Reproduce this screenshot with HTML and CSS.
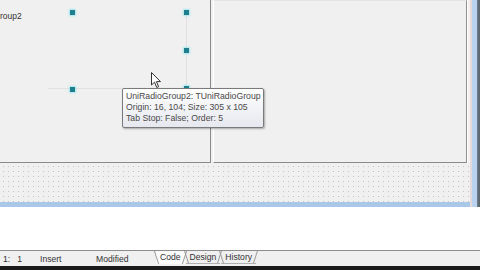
FILE: index.html
```html
<!DOCTYPE html>
<html>
<head>
<meta charset="utf-8">
<link rel="stylesheet" href="styles.css">
</head>
<body>
<div class="screen">
  <div class="form-window">
    <div class="form-body">
      <div class="panels">
        <div class="panel left">
          <div class="caption">roup2</div>
          <div class="sel-line v"></div>
          <div class="sel-line h"></div>
          <div class="handle h1"></div>
          <div class="handle h2"></div>
          <div class="handle h3"></div>
          <div class="handle h4"></div>
          <div class="handle h5"></div>
          <svg class="cursor" width="11" height="17" viewBox="0 0 11 17"><path d="M0.5 0.5 L0.5 13 L3.5 10.2 L5.8 15.5 L7.6 14.7 L5.4 9.6 L9.5 9.6 Z" fill="#fff" stroke="#333" stroke-width="1"/></svg>
          <div class="tooltip">
            <div>UniRadioGroup2: TUniRadioGroup</div>
            <div>Origin: 16, 104; Size: 305 x 105</div>
            <div>Tab Stop: False; Order: 5</div>
          </div>
        </div>
        <div class="panel right"></div>
        <div class="edge"></div>
      </div>
      <div class="dots"></div>
    </div>
    <div class="frame-right"></div>
  </div>
  <div class="white-area"></div>
  <div class="statusbar">
    <span class="cell pos">1:&nbsp;&nbsp; 1</span>
    <span class="cell mode">Insert</span>
    <span class="cell mod">Modified</span>
    <div class="tabs">
      <span class="tab active">Code</span>
      <span class="tab">Design</span>
      <span class="tab">History</span>
    </div>
  </div>
  <div class="bottom-black"></div>
</div>
</body>
</html>
```

FILE: styles.css
```css
* { box-sizing: border-box; }
html, body { margin: 0; padding: 0; }
body {
  width: 480px;
  height: 270px;
  overflow: hidden;
  font-family: "Liberation Sans", Arial, sans-serif;
  background: #fff;
}
.screen {
  display: flex;
  flex-direction: column;
  width: 480px;
  height: 270px;
}
.form-window {
  display: flex;
  height: 207px;
}
.form-body {
  flex: 1;
  display: flex;
  flex-direction: column;
  background: #f0f0f0;
  border-bottom: 5px solid #a9c7e6;
}
.panels {
  display: flex;
  height: 163px;
}
.panel {
  position: relative;
  background: #f0f0f0;
  border-bottom: 1px solid #8a8a8a;
}
.panel.left {
  width: 211px;
  border-right: 1px solid #8a8a8a;
}
.panel.right {
  flex: 1;
  margin-left: 2px;
  border-left: 1px solid #ffffff;
  border-right: 1px solid #8f8f8f;
  border-top: 1px solid #e4e4e4;
}
.edge {
  width: 3px;
  background: #f4f0f0;
  border-left: 1px solid #ffffff;
}
.dots {
  flex: 1;
  background-color: #f0f0f0;
  background-image: radial-gradient(circle, #c4c4c4 0.55px, transparent 0.9px);
  background-size: 5px 5px;
  background-position: 1px 1px;
}
.frame-right {
  width: 10px;
  background: linear-gradient(to right, #e6d9dc 0, #e6d9dc 2px, #b9d2ef 2px, #b9d2ef 7px, #6f7d8c 7px, #56606a 10px);
}
.caption {
  position: absolute;
  left: 0;
  top: 11px;
  font-size: 8.5px;
  color: #333;
}
.handle {
  position: absolute;
  width: 5px;
  height: 5px;
  background: #1f7f8c;
  box-shadow: 0 0 2px 1px #a9e6ee;
}
.h1 { left: 70px; top: 10px; }
.h2 { left: 184px; top: 10px; }
.h3 { left: 184px; top: 48px; }
.h4 { left: 70px; top: 87px; }
.h5 { left: 184px; top: 86px; }
.sel-line { position: absolute; background: #e0e0e0; }
.sel-line.v { left: 186px; top: 12px; width: 1px; height: 76px; }
.sel-line.h { left: 48px; top: 88px; width: 138px; height: 1px; }
.cursor { position: absolute; left: 151px; top: 72px; }
.tooltip {
  position: absolute;
  left: 122px;
  top: 88px;
  width: 142px;
  height: 40px;
  padding: 2px 3px;
  background: linear-gradient(#ffffff, #e6e8ef);
  border: 1px solid #7a7a7a;
  border-radius: 2px;
  box-shadow: 1px 1px 2px rgba(0,0,0,0.3);
  font-size: 8.7px;
  line-height: 11px;
  color: #4a4a4a;
  white-space: nowrap;
  z-index: 2;
}
.white-area {
  height: 43px;
  background: #ffffff;
}
.statusbar {
  display: flex;
  align-items: center;
  height: 16px;
  background: #f0f0f0;
  border-top: 1px solid #8c8c8c;
  font-size: 8.6px;
  color: #333;
}
.cell { display: inline-block; }
.pos { width: 40px; padding-left: 3px; }
.mode { width: 56px; }
.mod { width: 58px; }
.tabs {
  display: flex;
  align-self: flex-start;
  height: 13px;
  padding-left: 2px;
}
.tab {
  position: relative;
  padding: 0 4px;
  line-height: 12px;
  margin-right: 1px;
}
.tab::before,
.tab::after {
  content: "";
  position: absolute;
  top: 0;
  bottom: 0;
  width: 1px;
  background: #9a9a9a;
}
.tab::before { left: 0; transform: skewX(18deg); }
.tab::after { right: 0; transform: skewX(-18deg); }
.tab.active {
  background: #fafafa;
}
.tabs .tab:not(.active) {
  border-bottom: 1px solid #b0b0b0;
}
.bottom-black {
  flex: 1;
  background: #1a1a1a;
}
```
